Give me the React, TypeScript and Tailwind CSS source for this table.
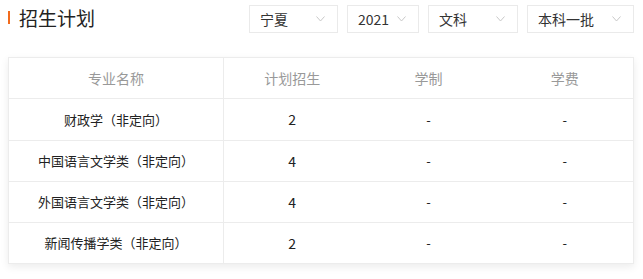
import React from "react";

const selects = [
	{ label: "宁夏", w: "w-[89px]" },
	{ label: "2021", w: "w-[72px]" },
	{ label: "文科", w: "w-[90px]" },
	{ label: "本科一批", w: "w-[107px]" },
];

const rows = [
	{ name: "财政学（非定向）", plan: "2", h: "h-[42px]" },
	{ name: "中国语言文学类（非定向）", plan: "4", h: "h-[41px]" },
	{ name: "外国语言文学类（非定向）", plan: "4", h: "h-[41px]" },
	{ name: "新闻传播学类（非定向）", plan: "2", h: "h-[41px]" },
];

function Chevron() {
	return (
		<svg width="9" height="6" viewBox="0 0 9 6" fill="none" className="shrink-0">
			<polyline points="0.5,0.5 4.5,5 8.5,0.5" stroke="#c8c8c8" strokeWidth="1" />
		</svg>
	);
}

export default function App() {
	return (
		<div
			className="w-[643px] h-[279px] bg-white text-[#333]"
			style={{ fontFamily: '"Noto Sans CJK SC", "Noto Sans", sans-serif' }}
		>
			{/* 标题 + 筛选 */}
			<div className="flex items-start justify-between pl-2 pr-[9px] pt-[5px]">
				<div className="flex items-center h-[28px] -mt-[2px]">
					<span className="w-[2px] h-[13px] bg-[#f26b1d] mr-[9px]" />
					<h2 className="text-[19px] leading-none text-[#222]">招生计划</h2>
				</div>
				<div className="flex gap-[9px]">
					{selects.map((s) => (
						<div
							key={s.label}
							className={`${s.w} h-[28px] border border-[#eaeaea] flex items-center justify-between pl-[10px] pr-3 text-[14px] text-[#333]`}
						>
							<span className="leading-none">{s.label}</span>
							<Chevron />
						</div>
					))}
				</div>
			</div>

			{/* 表格 */}
			<div className="ml-2 mr-[9px] mt-[24px] border-t border-x border-[#ececec] shadow-[0_3px_8px_rgba(0,0,0,0.08)]">
				<div className="grid grid-cols-[215px_1fr_1fr_1fr] h-[41px] border-b border-[#ececec] text-[14px] text-[#999]">
					<div className="flex items-center justify-center border-r border-[#ececec]">专业名称</div>
					<div className="flex items-center justify-center">计划招生</div>
					<div className="flex items-center justify-center">学制</div>
					<div className="flex items-center justify-center">学费</div>
				</div>
				{rows.map((r) => (
					<div
						key={r.name}
						className={`grid grid-cols-[215px_1fr_1fr_1fr] ${r.h} border-b border-[#ececec] text-[13px] text-[#222]`}
					>
						<div className="flex items-center justify-center border-r border-[#ececec]">{r.name}</div>
						<div className="flex items-center justify-center text-[14px]">{r.plan}</div>
						<div className="flex items-center justify-center">-</div>
						<div className="flex items-center justify-center">-</div>
					</div>
				))}
			</div>
		</div>
	);
}
